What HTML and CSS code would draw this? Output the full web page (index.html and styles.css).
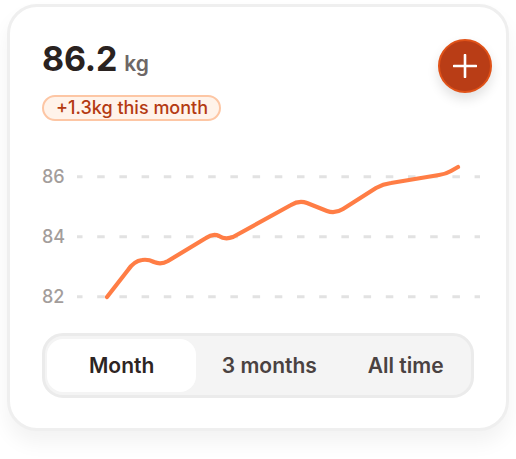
FILE: index.html
```html
<!DOCTYPE html>
<html>
<head>
<meta charset="utf-8">
<link rel="stylesheet" href="styles.css">
</head>
<body>
<div class="card">
  <div class="header">
    <div class="summary">
      <div class="weight"><span class="value">86.2</span><span class="unit">kg</span></div>
      <div class="badge">+1.3kg this month</div>
    </div>
    <button class="add" aria-label="Add">
      <svg width="24" height="24" viewBox="0 0 24 24"><path d="M12 1v22M1 12h22" stroke="#fff" stroke-width="2.6" stroke-linecap="round" fill="none"/></svg>
    </button>
  </div>
  <svg class="chart" width="444" height="180" viewBox="0 0 444 180">
    <g class="grid" stroke="#e2e2e2" stroke-width="3" stroke-dasharray="7.5 14.7" stroke-dashoffset="2">
      <line x1="35" y1="36.7" x2="438" y2="36.7"/>
      <line x1="35" y1="96.7" x2="438" y2="96.7"/>
      <line x1="35" y1="156.7" x2="438" y2="156.7"/>
    </g>
    <g class="labels">
      <text x="0" y="43">86</text>
      <text x="0" y="103">84</text>
      <text x="0" y="163">82</text>
    </g>
    <path d="M65 157 L86 130 Q92 121 100 120 Q106 119 112 122 Q119 125 126 121 L164 98 Q171 93 177 96 Q183 100 191 97 L249 65 Q257 60 265 63 L285 71 Q293 74 301 69 L334 48 Q341 44 349 43 L397 35 Q404 34 409 31 L416 27" fill="none" stroke="#ff7d45" stroke-width="4.2" stroke-linecap="round" stroke-linejoin="round"/>
  </svg>
  <div class="segmented">
    <div class="tab active">Month</div>
    <div class="tab">3 months</div>
    <div class="tab">All time</div>
  </div>
</div>
</body>
</html>
```
FILE: styles.css
```css
html, body {
  margin: 0;
  padding: 0;
  background: #ffffff;
}
body {
  font-family: Inter, "Noto Sans", sans-serif;
  width: 516px;
  height: 459px;
  overflow: hidden;
}
.card {
  box-sizing: border-box;
  margin: 4px 0 0 7px;
  width: 502px;
  height: 427px;
  border: 3px solid #efefef;
  border-radius: 30px;
  background: #fff;
  box-shadow: 0 12px 20px rgba(0, 0, 0, 0.05);
  padding: 32px 32px 0 32px;
}
.header {
  display: flex;
  justify-content: space-between;
  align-items: flex-start;
  margin-right: -18px;
}
.weight {
  display: flex;
  align-items: baseline;
  height: 40px;
  line-height: 40px;
}
.value {
  font-size: 34px;
  font-weight: 700;
  color: #2a2220;
  letter-spacing: -0.2px;
}
.unit {
  font-size: 21px;
  font-weight: 600;
  color: #6e6766;
  margin-left: 7px;
}
.badge {
  display: inline-block;
  margin-top: 16px;
  border: 2px solid #fdc6a4;
  background: #fff3ea;
  color: #b43a12;
  font-size: 18px;
  font-weight: 500;
  line-height: 22px;
  padding: 0 11px 0 12px;
  border-radius: 14px;
}
.add {
  box-sizing: border-box;
  width: 54px;
  height: 54px;
  border-radius: 50%;
  border: 2px solid #e05218;
  background: #b93d16;
  box-shadow: 0 6px 12px rgba(0, 0, 0, 0.12);
  display: flex;
  align-items: center;
  justify-content: center;
  padding: 0;
}
.chart {
  display: block;
  margin-top: 19px;
}
.labels text {
  font-family: Inter, sans-serif;
  font-size: 18px;
  fill: #a39d9b;
  font-weight: 500;
}
.segmented {
  box-sizing: border-box;
  margin-top: 13px;
  width: 432px;
  height: 65px;
  border: 3px solid #ebebeb;
  background: #f4f4f4;
  border-radius: 21px;
  padding: 3px 2px;
  display: flex;
}
.tab {
  flex: 1 1 auto;
  display: flex;
  align-items: center;
  justify-content: center;
  white-space: nowrap;
  font-size: 21px;
  font-weight: 600;
  color: #4a4241;
  border-radius: 16px;
}
.tab.active {
  flex: 0 0 auto;
  background: #fff;
  color: #2d2523;
  padding: 0 42px;
}
```
